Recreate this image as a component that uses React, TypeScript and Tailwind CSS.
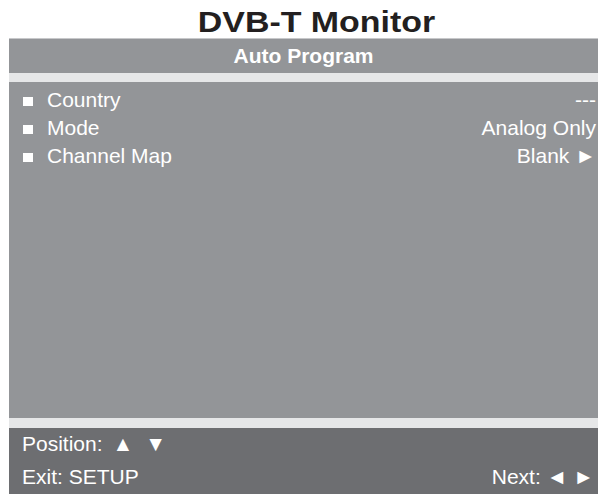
export default function App() {
  return (
    <div
      className="w-[598px] h-[494px] bg-white flex flex-col overflow-hidden"
      style={{ fontFamily: '"Liberation Sans", Arial, sans-serif' }}
    >
      <div className="h-[38px] flex items-center justify-center pt-[6px] pl-[35px]">
        <span className="inline-block text-[29px] font-bold text-[#231f20] leading-none scale-x-[1.17]">
          DVB-T Monitor
        </span>
      </div>
      <div className="flex-1 ml-[9px] flex flex-col border-t border-[#c7c8ca]">
        <div className="h-[34px] bg-[#939598] flex items-center justify-center text-white font-bold text-[21px]">
          Auto Program
        </div>
        <div className="h-[9px] bg-[#e6e7e8]" />
        <div className="flex-1 bg-[#939598] text-white text-[21px] pt-[4px]">
          {[
            ['Country', '---'],
            ['Mode', 'Analog Only'],
            ['Channel Map', 'Blank ►'],
          ].map(([label, value]) => (
            <div key={label} className="h-[28px] flex items-center justify-between pl-[14px] pr-[2px]">
              <div className="flex items-center">
                <span className="w-[10px] h-[9px] bg-white mr-[14px] mt-[2px]" />
                <span>{label}</span>
              </div>
              <span>{value}</span>
            </div>
          ))}
        </div>
        <div className="h-[10px] bg-[#e6e7e8]" />
        <div className="h-[66px] bg-[#6d6e71] text-white text-[21px] flex flex-col justify-center pl-[13px] pr-[4px]">
          <div className="h-[32px] flex items-center">
            <span>Position:</span>
            <span className="ml-[10px]">▲</span>
            <span className="ml-[12px]">▼</span>
          </div>
          <div className="h-[34px] flex items-center justify-between">
            <span>Exit: SETUP</span>
            <span>Next: ◄ ►</span>
          </div>
        </div>
      </div>
    </div>
  );
}
